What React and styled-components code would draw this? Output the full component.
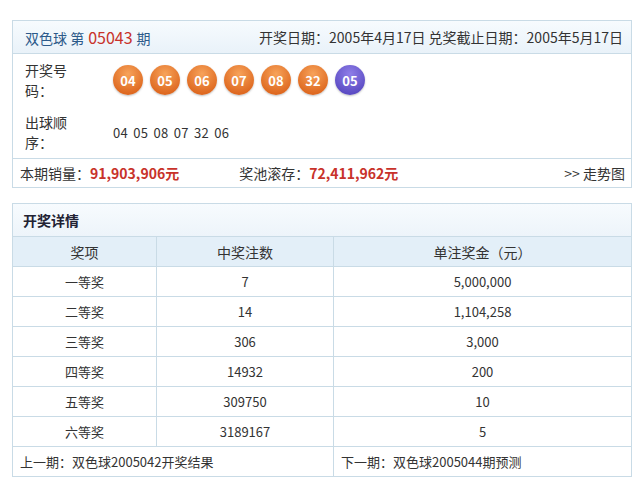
import React from "react";
import styled, { createGlobalStyle } from "styled-components";

const Global = createGlobalStyle`
  body { margin: 0; background: #fff; font-family: "Noto Sans CJK SC", "Noto Sans", sans-serif; font-size: 13px; color: #333; }
`;
const Page = styled.div` padding: 20px 8px 0 12px; width: 620px; `;
const Panel = styled.div` border: 1px solid #c9dbe6; margin-bottom: 15px; `;
const Head = styled.div`
  height: 32px; display: flex; align-items: center; justify-content: space-between; padding: 0 8px 0 12px;
  background: linear-gradient(#f7fbfe, #e9f2f9); border-bottom: 1px solid #c9dbe6; font-size: 14px;
`;
const Blue = styled.span` color: #2c5a8a; `;
const Red = styled.span` color: #c8322a; font-size: 16px; margin: 0 4px; `;
const Dark = styled.span` color: #333; `;
const Row = styled.div` display: flex; align-items: center; padding: 6px 0 6px 12px; `;
const Label = styled.div` width: 88px; line-height: 20px; font-size: 14px; `;
const Balls = styled.div` display: flex; gap: 7px; `;
const Ball = styled.div`
  width: 30px; height: 30px; border-radius: 50%; color: #fff; font-weight: bold; font-size: 13px;
  display: flex; align-items: center; justify-content: center;
  background: ${p => p.$blue ? "radial-gradient(circle at 50% 30%, #8f7fe8, #4b3bb8)" : "radial-gradient(circle at 50% 30%, #f7a35a, #d6560e)"};
  box-shadow: 0 1px 2px rgba(0,0,0,0.25);
`;
const Seq = styled.div` word-spacing: 2px; letter-spacing: 0.3px; `;
const Foot = styled.div`
  display: flex; align-items: center; height: 28px; border-top: 1px solid #c9dbe6; padding: 0 6px 0 7px; font-size: 14px;
`;
const Money = styled.span` color: #c8322a; font-weight: bold; `;
const Pool = styled.span` margin-left: 60px; `;
const Grow = styled.div` flex: 1; `;
const Title = styled.div`
  height: 32px; display: flex; align-items: center; padding-left: 10px; font-weight: bold; font-size: 14px; color: #223;
  background: linear-gradient(#f7fbfe, #edf4fa);
`;
const Table = styled.div` display: grid; grid-template-columns: 143px 177px 1fr; `;
const Cell = styled.div`
  height: 29px; display: flex; align-items: center; justify-content: ${p => p.$left ? "flex-start" : "center"};
  padding-left: ${p => p.$left ? "7px" : "0"};
  border-top: 1px solid #c9dbe6; border-left: ${p => p.$first ? "none" : "1px solid #c9dbe6"};
  background: ${p => p.$head ? "#e3eff8" : "#fff"}; font-size: ${p => p.$head ? "14px" : "13px"};
  ${p => p.$span && `grid-column: span ${p.$span};`}
`;

const rows = [
  ["一等奖", "7", "5,000,000"], ["二等奖", "14", "1,104,258"], ["三等奖", "306", "3,000"],
  ["四等奖", "14932", "200"], ["五等奖", "309750", "10"], ["六等奖", "3189167", "5"],
];

export default function App() {
  return (
    <Page>
      <Global />
      <Panel>
        <Head>
          <span><Blue>双色球 第</Blue><Red>05043</Red><Blue>期</Blue></span>
          <Dark>开奖日期：2005年4月17日 兑奖截止日期：2005年5月17日</Dark>
        </Head>
        <Row>
          <Label>开奖号<br />码：</Label>
          <Balls>
            {["04","05","06","07","08","32"].map(n => <Ball key={n}>{n}</Ball>)}
            <Ball $blue>05</Ball>
          </Balls>
        </Row>
        <Row>
          <Label>出球顺<br />序：</Label>
          <Seq>04 05 08 07 32 06</Seq>
        </Row>
        <Foot>
          <span>本期销量：<Money>91,903,906元</Money></span>
          <Pool>奖池滚存：<Money>72,411,962元</Money></Pool>
          <Grow />
          <span>&gt;&gt; 走势图</span>
        </Foot>
      </Panel>
      <Panel>
        <Title>开奖详情</Title>
        <Table>
          <Cell $head $first>奖项</Cell><Cell $head>中奖注数</Cell><Cell $head>单注奖金（元）</Cell>
          {rows.map(r => (
            <React.Fragment key={r[0]}>
              <Cell $first>{r[0]}</Cell><Cell>{r[1]}</Cell><Cell>{r[2]}</Cell>
            </React.Fragment>
          ))}
          <Cell $first $left $span={2}>上一期：双色球2005042开奖结果</Cell>
          <Cell $left>下一期：双色球2005044期预测</Cell>
        </Table>
      </Panel>
    </Page>
  );
}
